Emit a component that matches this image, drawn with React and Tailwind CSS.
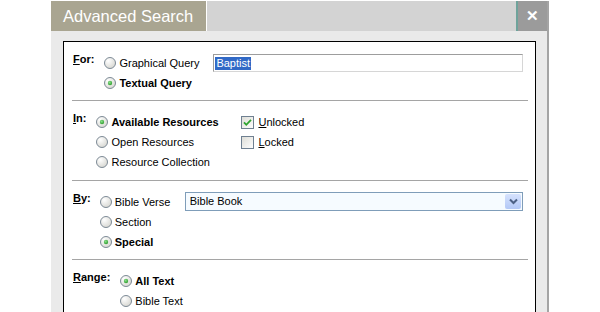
function Radio({ checked }) {
  return (
    <svg width="12" height="12" viewBox="0 0 12 12" className="shrink-0">
      <defs>
        <radialGradient id="radioFill" cx="0.35" cy="0.3" r="0.8">
          <stop offset="0" stopColor="#ffffff" />
          <stop offset="1" stopColor="#d4d4ce" />
        </radialGradient>
        <radialGradient id="radioDot" cx="0.4" cy="0.35" r="0.7">
          <stop offset="0" stopColor="#8be08b" />
          <stop offset="1" stopColor="#2b9a2b" />
        </radialGradient>
      </defs>
      <circle cx="6" cy="6" r="5.5" fill="url(#radioFill)" stroke="#7d8a96" strokeWidth="1" />
      {checked && <circle cx="6" cy="6" r="2.2" fill="url(#radioDot)" />}
    </svg>
  )
}

function Option({ checked, bold, children }) {
  return (
    <div className="flex items-center h-5">
      <Radio checked={checked} />
      <span className={"ml-[3px] whitespace-nowrap " + (bold ? "font-bold" : "")}>{children}</span>
    </div>
  )
}

function Check({ checked, children }) {
  return (
    <div className="flex items-center h-5">
      <svg width="13" height="13" viewBox="0 0 13 13" className="shrink-0">
        <defs>
          <linearGradient id="boxFill" x1="0" y1="0" x2="1" y2="1">
            <stop offset="0" stopColor="#dcdcd6" />
            <stop offset="1" stopColor="#ffffff" />
          </linearGradient>
        </defs>
        <rect x="0.5" y="0.5" width="12" height="12" fill="url(#boxFill)" stroke="#6f8091" />
        {checked && (
          <path d="M3 6.3 L5.3 8.8 L10 3.8" fill="none" stroke="#2fa42f" strokeWidth="1.8" />
        )}
      </svg>
      <span className="ml-[4px] whitespace-nowrap">{children}</span>
    </div>
  )
}

function Label({ first, rest }) {
  return (
    <div className="font-bold leading-5 -mt-1 whitespace-nowrap">
      <span className="underline underline-offset-[1px]">{first}</span>
      {rest}
    </div>
  )
}

export default function App() {
  return (
    <div
      className="w-[600px] h-[312px] bg-white overflow-hidden pt-[1px] pl-[51px] text-[11px] text-black"
      style={{ fontFamily: '"Liberation Sans", Arial, sans-serif' }}
    >
      <div className="w-[498px] border-r-2 border-[#a4a4a4]">
        {/* Title bar */}
        <div className="flex h-[30px]">
          <div className="w-[155px] bg-[#a9a591] text-white text-[16.5px] flex items-center pl-[12px] pt-[1px]">
            Advanced Search
          </div>
          <div className="w-px bg-white" />
          <div className="flex-1 bg-[#d3d3d3]" />
          <div className="w-[31px] bg-[#9b9b9b] border-l-2 border-[#6ea39b] flex items-center justify-center text-white text-[15px] font-bold">
            ✕
          </div>
        </div>

        {/* Body */}
        <div className="bg-[#eaeaea] pt-[10px] pl-[12px] pr-[11px] h-[300px]">
          <div className="bg-white border border-black h-full px-[8px] pr-[7px]">
            {/* For */}
            <div className="flex pt-[11px] pb-[7px] pl-[1px] pr-[5px] border-b border-[#a5a5a5]">
              <Label first="F" rest="or:" />
              <div className="ml-[10px] w-[109px] shrink-0">
                <Option>Graphical Query</Option>
                <Option checked bold>Textual Query</Option>
              </div>
              <div className="flex-1">
                <div className="h-[18px] mt-[1px] border border-[#9d9d9d] border-b-[#d6d6d6] border-r-[#d6d6d6] flex items-center pl-[1px]">
                  <span className="bg-[#3169c6] text-white leading-[13px] px-[1px]">Baptist</span>
                </div>
              </div>
            </div>

            {/* In */}
            <div className="flex pt-[11px] pb-[8px] pl-[1px] border-b border-[#a5a5a5]">
              <Label first="I" rest="n:" />
              <div className="ml-[10px] w-[145px] shrink-0">
                <Option checked bold>Available Resources</Option>
                <Option>Open Resources</Option>
                <Option>Resource Collection</Option>
              </div>
              <div>
                <Check checked>
                  <span className="underline underline-offset-[1px]">U</span>nlocked
                </Check>
                <Check>
                  <span className="underline underline-offset-[1px]">L</span>ocked
                </Check>
              </div>
            </div>

            {/* By */}
            <div className="flex pt-[11px] pb-[7px] pl-[1px] pr-[5px] border-b border-[#a5a5a5]">
              <Label first="B" rest="y:" />
              <div className="ml-[9px] w-[85px] shrink-0">
                <Option>Bible Verse</Option>
                <Option>Section</Option>
                <Option checked bold>Special</Option>
              </div>
              <div className="flex-1">
                <div className="h-[19px] border border-[#7f9db9] bg-[#f6fbff] flex items-center pl-[4px] pr-[1px]">
                  <span className="flex-1">Bible Book</span>
                  <div className="w-[16px] h-[15px] bg-gradient-to-b from-[#d6e2fd] to-[#b3c8f6] rounded-[2px] flex items-center justify-center">
                    <svg width="9" height="7" viewBox="0 0 9 7">
                      <path d="M1 1.5 L4.5 5 L8 1.5" fill="none" stroke="#4d6185" strokeWidth="2" />
                    </svg>
                  </div>
                </div>
              </div>
            </div>

            {/* Range */}
            <div className="flex pt-[11px] pl-[1px]">
              <Label first="R" rest="ange:" />
              <div className="ml-[10px]">
                <Option checked bold>All Text</Option>
                <Option>Bible Text</Option>
              </div>
            </div>
          </div>
        </div>
      </div>
    </div>
  )
}
